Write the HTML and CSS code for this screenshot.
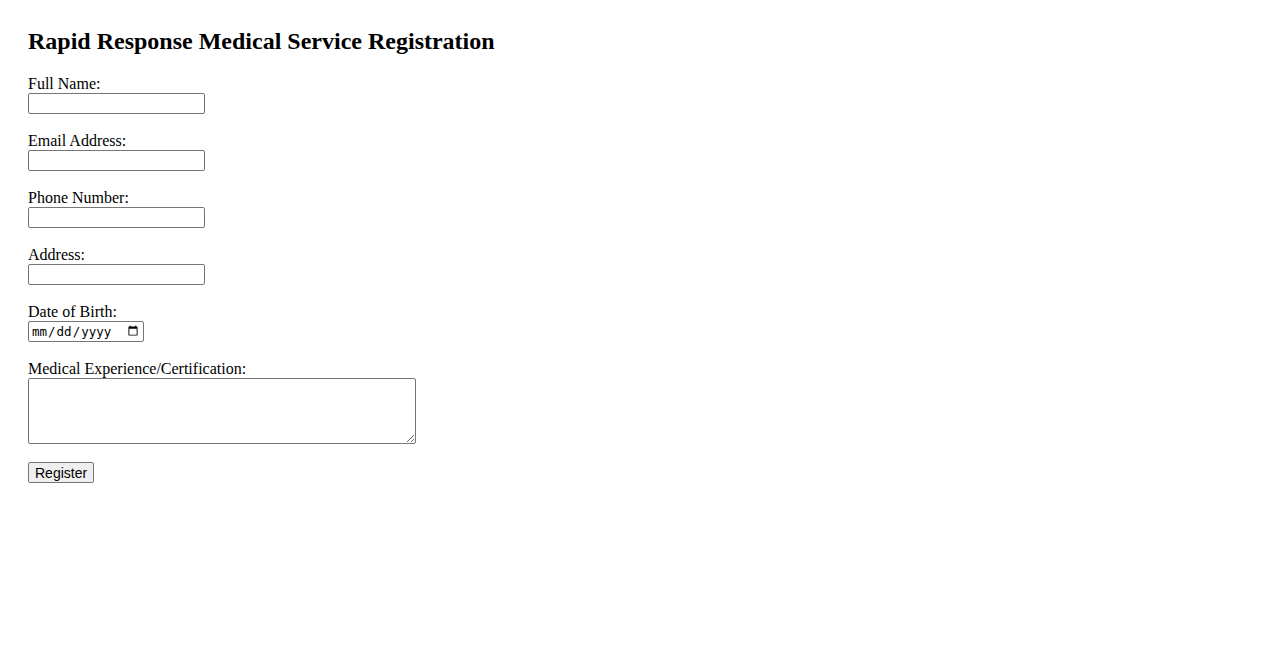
FILE: index.html
```html
<!DOCTYPE html>
<html>
<head>
<meta charset="utf-8">
<title>Rapid Response Medical Service Registration</title>
<link rel="stylesheet" href="styles.css">
</head>
<body>
<h2 class="title">Rapid Response Medical Service Registration</h2>
<form class="reg-form">
<label for="name">Full Name:</label><br>
<input class="field" type="text" id="name"><br><br>
<label for="email">Email Address:</label><br>
<input class="field" type="email" id="email"><br><br>
<label for="phone">Phone Number:</label><br>
<input class="field" type="tel" id="phone"><br><br>
<label for="address">Address:</label><br>
<input class="field" type="text" id="address"><br><br>
<label for="dob">Date of Birth:</label><br>
<input class="date-field" type="date" id="dob"><br><br>
<label for="exp">Medical Experience/Certification:</label><br>
<textarea class="area" id="exp"></textarea><br><br>
<button class="submit" type="submit">Register</button>
</form>
</body>
</html>
```
FILE: styles.css
```css
body {
  margin: 0;
  padding: 28px;
  font-family: "Liberation Serif", "Times New Roman", serif;
  font-size: 16px;
  color: #000;
  background: #fff;
}
.title {
  margin: 0 0 20px;
  font-size: 24px;
  font-weight: bold;
}
.field {
  width: 177px;
  height: 21px;
  box-sizing: border-box;
  border: 1px solid #767676;
  border-radius: 2px;
  padding: 1px 2px;
  font-family: "Liberation Sans", Arial, sans-serif;
  font-size: 13.33px;
  vertical-align: bottom;
}
.date-field {
  width: 116px;
  height: 21px;
  box-sizing: border-box;
  border: 1px solid #767676;
  border-radius: 2px;
  padding: 1px 2px;
  font-family: "DejaVu Sans Mono", monospace;
  font-size: 12.5px;
  vertical-align: bottom;
}
.area {
  width: 388px;
  height: 66px;
  box-sizing: border-box;
  border: 1px solid #767676;
  border-radius: 2px;
  padding: 2px;
  font-family: "Liberation Mono", monospace;
  font-size: 13.33px;
  vertical-align: bottom;
  margin: 0;
}
.submit {
  width: 66px;
  height: 21px;
  padding: 1px 6px;
  border: 1px solid #767676;
  border-radius: 2px;
  background: #efefef;
  font-family: "Liberation Sans", Arial, sans-serif;
  font-size: 14px;
  color: #000;
}
```
